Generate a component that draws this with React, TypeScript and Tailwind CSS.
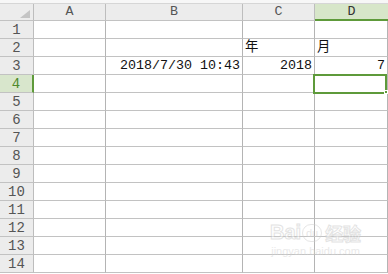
import React from "react";

const cols = [34, 72, 137, 72, 73];
const rows = Array.from({ length: 14 }, (_, i) => i + 1);

const data: Record<string, { text: string; align: "left" | "right" }> = {
  "2-C": { text: "年", align: "left" },
  "2-D": { text: "月", align: "left" },
  "3-B": { text: "2018/7/30 10:43", align: "right" },
  "3-C": { text: "2018", align: "right" },
  "3-D": { text: "7", align: "right" },
};

const letters = ["A", "B", "C", "D"];

export default function App() {
  return (
    <div
      className="relative w-[388px] h-[274px] overflow-hidden bg-white text-[13.33px] text-[#111]"
      style={{ fontFamily: '"Liberation Mono", "Noto Sans CJK SC", monospace' }}
    >
      <div className="h-[4px] bg-[#f7f7f7] border-b border-[#d6d6d6]" />
      {/* header row */}
      <div className="flex h-[17px] bg-[#ececec]">
        <div className="w-[34px] h-full border-r border-[#bdbdbd] border-b border-b-[#c2c2c2] flex items-end justify-end pr-[3px] pb-[2px]">
          <svg width="10" height="8" viewBox="0 0 10 8">
            <polygon points="10,0 10,8 0,8" fill="#c4c4c4" />
          </svg>
        </div>
        {letters.map((l, i) => (
          <div
            key={l}
            className={
              l === "D"
                ? "h-full flex items-center justify-center bg-[#d7e6c9] border-b-2 border-[#5e9a3a] text-[#333] leading-none"
                : "h-full flex items-center justify-center border-r border-r-[#bdbdbd] border-b border-b-[#c2c2c2] text-[#555] leading-none"
            }
            style={{ width: cols[i + 1] }}
          >
            {l}
          </div>
        ))}
      </div>
      {rows.map((r) => (
        <div key={r} className="flex h-[18px]">
          <div
            className={
              r === 4
                ? "w-[34px] h-full bg-[#d8e6cc] border-r-2 border-[#5e9a3a] border-b border-b-[#c2c2c2] flex items-center justify-center text-[#4f8a2c] leading-none text-[14px]"
                : "w-[34px] h-full bg-[#ececec] border-r border-r-[#bdbdbd] border-b border-b-[#c2c2c2] flex items-center justify-center text-[#555] leading-none text-[14px]"
            }
          >
            {r}
          </div>
          {letters.map((l, i) => {
            const d = data[`${r}-${l}`];
            return (
              <div
                key={l}
                className={
                  "h-full border-r border-r-[#b4b4b4] border-b border-b-[#c2c2c2] flex items-center px-[2px] leading-none whitespace-nowrap " +
                  (d && d.align === "right" ? "justify-end" : "justify-start")
                }
                style={{ width: cols[i + 1] }}
              >
                {d ? d.text : ""}
              </div>
            );
          })}
        </div>
      ))}
      {/* selected cell */}
      <div className="absolute left-[313px] top-[74px] w-[74px] h-[20px] border-2 border-[#5e9a3a]" />
      <div className="absolute left-[384px] top-[90px] w-[4px] h-[4px] bg-[#5e9a3a] border border-white" />
      {/* watermark */}
      <div className="absolute left-[270px] top-[222px] flex flex-col items-center opacity-50 pointer-events-none">
        <div className="flex items-end">
          <span
            className="text-[20px] font-bold text-white leading-none"
            style={{ fontFamily: '"Liberation Sans", sans-serif', WebkitTextStroke: "1px #c8c8c8" }}
          >
            Bai
          </span>
          <span className="relative mx-[1px] w-[20px] h-[18px] rounded-full border border-[#cfcfcf] flex items-center justify-center text-[11px] text-[#cfcfcf] leading-none" style={{ fontFamily: '"Liberation Sans", sans-serif' }}>
            du
          </span>
          <span
            className="text-[18px] font-bold text-white leading-none ml-[2px]"
            style={{ fontFamily: '"Noto Sans CJK SC", sans-serif', WebkitTextStroke: "1px #c8c8c8" }}
          >
            经验
          </span>
        </div>
        <span className="text-[11px] text-[#d4d4d4] leading-none mt-[4px]" style={{ fontFamily: '"Liberation Sans", sans-serif' }}>
          jingyan.baidu.com
        </span>
      </div>
    </div>
  );
}
